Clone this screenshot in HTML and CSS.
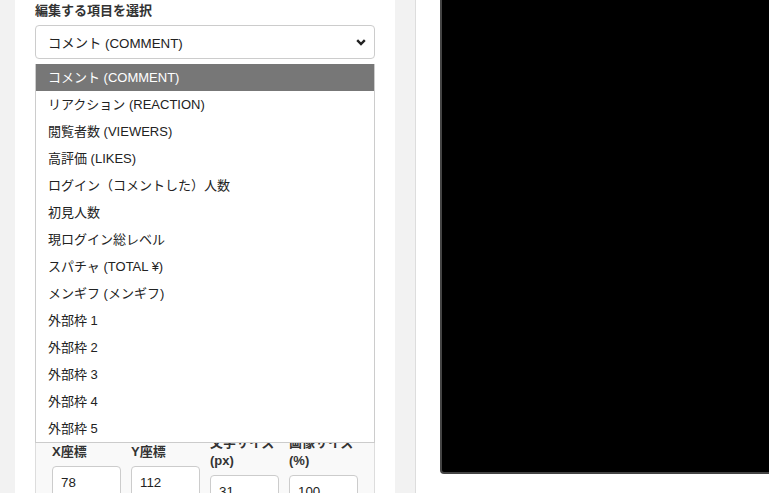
FILE: index.html
```html
<!DOCTYPE html>
<html lang="ja">
<head>
<meta charset="utf-8">
<title>表示項目の編集</title>
<link rel="stylesheet" href="styles.css">
</head>
<body>
  <aside class="editor">
    <label class="field-title" for="target">編集する項目を選択</label>
    <div class="picker">
      <div class="select" id="target">
        <span>コメント (COMMENT)</span>
        <svg class="chevron" width="10" height="7" viewBox="0 0 10 7"><polyline points="1.2,1.2 5,5 8.8,1.2" fill="none" stroke="#222" stroke-width="2.4"/></svg>
      </div>
      <ul class="options">
        <li class="active">コメント (COMMENT)</li>
        <li>リアクション (REACTION)</li>
        <li>閲覧者数 (VIEWERS)</li>
        <li>高評価 (LIKES)</li>
        <li>ログイン（コメントした）人数</li>
        <li>初見人数</li>
        <li>現ログイン総レベル</li>
        <li>スパチャ (TOTAL ¥)</li>
        <li>メンギフ (メンギフ)</li>
        <li>外部枠 1</li>
        <li>外部枠 2</li>
        <li>外部枠 3</li>
        <li>外部枠 4</li>
        <li>外部枠 5</li>
      </ul>
    </div>
    <section class="settings">
      <div class="fields">
        <div class="field"><label>X座標</label><input value="78"></div>
        <div class="field"><label>Y座標</label><input value="112"></div>
        <div class="field"><label>文字サイズ (px)</label><input value="31"></div>
        <div class="field"><label>画像サイズ (%)</label><input value="100"></div>
      </div>
    </section>
  </aside>
  <main class="stage">
    <div class="preview"></div>
  </main>
</body>
</html>
```

FILE: styles.css
```css
html, body {
  margin: 0;
  height: 100%;
  overflow: hidden;
}

body {
  background: #f2f2f2;
  font-family: "Liberation Sans", Arial, "Noto Sans CJK JP", sans-serif;
  color: #222;
  display: flex;
  gap: 20px;
  padding-left: 15px;
}

.editor {
  width: 340px;
  flex: none;
  background: #fff;
  padding: 0 20px;
  overflow: hidden;
}

.field-title {
  display: block;
  font-size: 13px;
  font-weight: bold;
  color: #333;
  line-height: 18px;
  margin-top: 2px;
}

.picker {
  position: relative;
  margin-top: 5px;
}

.select {
  height: 34px;
  box-sizing: border-box;
  border: 1px solid #ccc;
  border-radius: 4px;
  padding: 0 8px 0 12px;
  display: flex;
  align-items: center;
  justify-content: space-between;
  font-size: 13.333px;
}

.chevron {
  display: block;
}

.options {
  position: absolute;
  top: 39px;
  left: 0;
  right: 0;
  margin: 0;
  padding: 0;
  list-style: none;
  background: #fff;
  border: 1px solid #ccc;
  border-top: 0;
  z-index: 2;
}

.options li {
  height: 27px;
  line-height: 28px;
  padding-left: 12px;
  font-size: 13px;
}

.options li.active {
  background: #777;
  color: #fff;
}

.settings {
  margin-top: 358px;
  background: #f9f9f9;
  border: 1px solid #ddd;
  border-radius: 4px;
  padding: 16px;
}

.fields {
  display: grid;
  grid-template-columns: repeat(4, 1fr);
  gap: 10px;
  align-items: center;
}

.field {
  display: flex;
  flex-direction: column;
}

.field label {
  font-size: 13px;
  font-weight: bold;
  color: #333;
  line-height: 18px;
  margin-bottom: 5px;
}

.field input {
  width: 100%;
  height: 32px;
  box-sizing: border-box;
  border: 1px solid #ccc;
  border-radius: 4px;
  padding: 0 8px;
  font: 13.333px "Liberation Sans", Arial, sans-serif;
  color: #222;
  background: #fff;
}

.stage {
  flex: 1;
  min-width: 0;
  background: #fff;
  border-left: 1px solid #ddd;
  padding-left: 24px;
  overflow: hidden;
}

.preview {
  width: 380px;
  height: 472px;
  background: #000;
  border: 2px solid #444;
  border-top: 0;
  border-radius: 0 0 4px 4px;
}
```
